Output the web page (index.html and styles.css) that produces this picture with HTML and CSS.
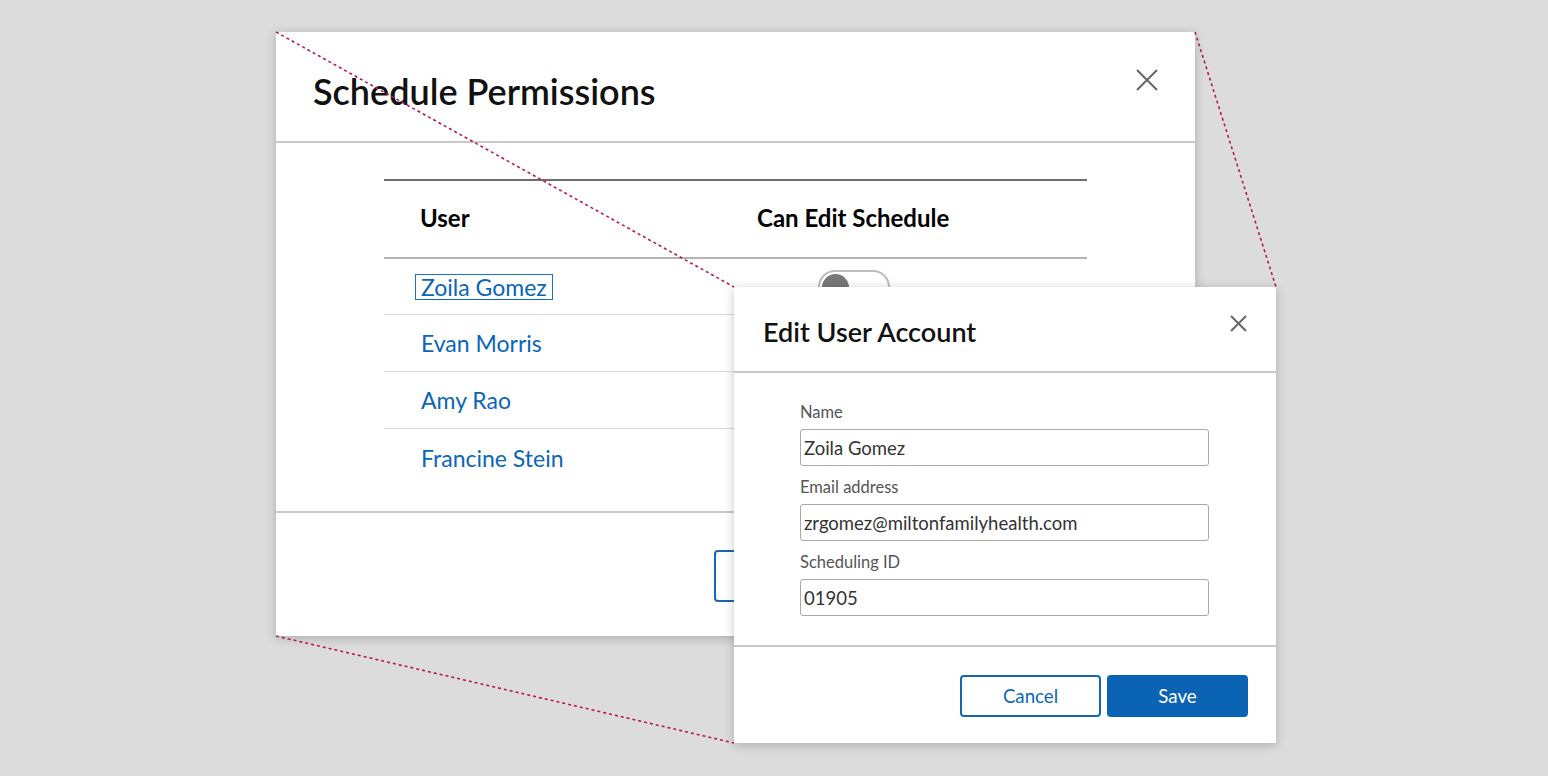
FILE: index.html
```html
<!DOCTYPE html>
<html lang="en">
<head>
<meta charset="utf-8">
<title>Schedule Permissions</title>
<link rel="stylesheet" href="styles.css">
</head>
<body>
<div class="stage">
  <section class="perm">
    <header class="perm-head">
      <h1 class="perm-title">Schedule Permissions</h1>
      <button class="close-btn big" aria-label="Close">
        <svg viewBox="0 0 22 22" width="22" height="22"><path d="M1 1L21 21M21 1L1 21" /></svg>
      </button>
    </header>
    <div class="perm-body">
      <div class="table">
        <div class="row head">
          <div class="cell c1">User</div>
          <div class="cell c2">Can Edit Schedule</div>
        </div>
        <div class="row first">
          <div class="cell c1"><a class="user focused" href="#">Zoila Gomez</a></div>
          <div class="cell c2"><span class="toggle"><span class="knob"></span></span></div>
        </div>
        <div class="row">
          <div class="cell c1"><a class="user" href="#">Evan Morris</a></div>
          <div class="cell c2"><span class="toggle"><span class="knob"></span></span></div>
        </div>
        <div class="row">
          <div class="cell c1"><a class="user" href="#">Amy Rao</a></div>
          <div class="cell c2"><span class="toggle"><span class="knob"></span></span></div>
        </div>
        <div class="row last">
          <div class="cell c1"><a class="user" href="#">Francine Stein</a></div>
          <div class="cell c2"><span class="toggle"><span class="knob"></span></span></div>
        </div>
      </div>
    </div>
    <footer class="perm-foot">
      <button class="btn outline" aria-label="Close"></button>
    </footer>
  </section>
</div>

<svg class="zoom-lines" width="1548" height="776" viewBox="0 0 1548 776">
  <line x1="276" y1="32" x2="734" y2="287" />
  <line x1="1195" y1="32" x2="1276" y2="287" />
  <line x1="276" y1="636" x2="734" y2="743" />
</svg>

<section class="edit">
  <header class="edit-head">
    <h2 class="edit-title">Edit User Account</h2>
    <button class="close-btn small" aria-label="Close">
      <svg viewBox="0 0 17 17" width="17" height="17"><path d="M1 1L16 16M16 1L1 16" /></svg>
    </button>
  </header>
  <div class="edit-body">
    <label class="field">
      <span class="label">Name</span>
      <span class="input">Zoila Gomez</span>
    </label>
    <label class="field">
      <span class="label">Email address</span>
      <span class="input">zrgomez@miltonfamilyhealth.com</span>
    </label>
    <label class="field">
      <span class="label">Scheduling ID</span>
      <span class="input">01905</span>
    </label>
  </div>
  <footer class="edit-foot">
    <button class="btn outline sm">Cancel</button>
    <button class="btn primary sm">Save</button>
  </footer>
</section>
</body>
</html>
```

FILE: styles.css
```css
* { box-sizing: border-box; }

html, body {
  margin: 0;
  padding: 0;
}

body {
  width: 1548px;
  height: 776px;
  background: #dcdcdc;
  font-family: "Lato", "Liberation Sans", sans-serif;
  color: #111;
  position: relative;
  overflow: hidden;
}

.stage {
  padding: 32px 0 0 276px;
}

/* ---------- Big dialog ---------- */
.perm {
  width: 919px;
  height: 604px;
  background: #fff;
  box-shadow: 0 2px 10px rgba(0, 0, 0, 0.22);
  display: flex;
  flex-direction: column;
}

.perm-head {
  height: 111px;
  flex: none;
  border-bottom: 2px solid #c9c9c9;
  display: flex;
  align-items: flex-start;
  justify-content: space-between;
  padding: 0 37px;
}

.perm-title {
  margin: 0;
  padding-top: 37px;
  font-size: 36px;
  line-height: 44px;
  font-weight: 600;
  color: #111;
}

.close-btn {
  border: 0;
  background: none;
  padding: 0;
  display: flex;
}

.close-btn svg path {
  stroke: #666;
  stroke-width: 2;
  fill: none;
}

.close-btn.big {
  margin-top: 37px;
}

.perm-body {
  height: 370px;
  flex: none;
  border-bottom: 2px solid #c9c9c9;
  padding-top: 36px;
}

.table {
  width: 703px;
  margin: 0 auto;
  border-top: 2px solid #6e6e6e;
}

.row {
  display: flex;
  height: 57px;
  align-items: center;
  border-bottom: 1px solid #dcdcdc;
}

.row.first {
  height: 56px;
}

.row.last {
  border-bottom: 0;
}

.row.head {
  height: 78px;
  align-items: flex-start;
  border-bottom: 2px solid #b4b4b4;
}

.cell {
  padding-left: 36px;
}

.c1 {
  width: 337px;
}

.c2 {
  flex: 1;
}

.row.head .cell {
  padding-top: 23px;
  font-size: 24px;
  line-height: 28px;
  font-weight: 700;
  color: #000;
}

.user {
  font-size: 23px;
  line-height: 24px;
  color: #0a66b7;
  text-decoration: none;
  display: inline-block;
  padding: 0 5px;
  margin-left: -5px;
  border: 1px solid transparent;
}

.user.focused {
  border-color: #1b71c2;
  text-decoration: underline;
  text-underline-offset: 3px;
  text-decoration-thickness: 1px;
}

.toggle {
  display: block;
  margin-left: 61px;
  width: 72px;
  height: 34px;
  border: 2px solid #bdbdbd;
  border-radius: 17px;
  padding: 2px;
}

.knob {
  display: block;
  width: 27px;
  height: 27px;
  border-radius: 50%;
  background: #777;
}

.perm-foot {
  flex: 1;
  padding: 37px 0 0 438px;
  display: flex;
  align-items: flex-start;
}

.btn {
  font-family: "Lato", "Liberation Sans", sans-serif;
  font-size: 18.7px;
  border-radius: 4px;
  cursor: pointer;
}

.btn.outline {
  width: 160px;
  height: 52px;
  background: #fff;
  color: #0a66b7;
  border: 2px solid #1567b5;
}

.btn.sm {
  width: 141px;
  height: 42px;
}

.btn.primary {
  background: #0a64b3;
  color: #fff;
  border: 0;
}

/* ---------- zoom lines ---------- */
.zoom-lines {
  position: absolute;
  left: 0;
  top: 0;
  pointer-events: none;
}

.zoom-lines line {
  stroke: #b8175a;
  stroke-width: 1.6;
  stroke-dasharray: 3 3;
}

/* ---------- Edit dialog ---------- */
.edit {
  position: absolute;
  left: 734px;
  top: 287px;
  width: 542px;
  height: 456px;
  background: #fff;
  box-shadow: 0 2px 10px rgba(0, 0, 0, 0.22);
  display: flex;
  flex-direction: column;
}

.edit-head {
  height: 86px;
  flex: none;
  border-bottom: 2px solid #c9c9c9;
  display: flex;
  justify-content: space-between;
  align-items: flex-start;
  padding: 0 29px;
}

.edit-title {
  margin: 0;
  padding-top: 29px;
  font-size: 27px;
  line-height: 32px;
  font-weight: 600;
  color: #111;
}

.close-btn.small {
  margin-top: 28px;
}

.edit-body {
  height: 274px;
  flex: none;
  border-bottom: 2px solid #c9c9c9;
  padding: 29px 0 0 66px;
  display: flex;
  flex-direction: column;
  gap: 11px;
}

.field {
  display: flex;
  flex-direction: column;
  width: 409px;
}

.label {
  font-size: 16.5px;
  line-height: 20px;
  color: #555;
  margin-bottom: 7px;
}

.input {
  height: 37px;
  border: 1px solid #a9a9a9;
  border-radius: 3px;
  padding-left: 3px;
  display: flex;
  align-items: center;
  font-size: 18.5px;
  color: #333;
}

.edit-foot {
  flex: 1;
  display: flex;
  justify-content: flex-end;
  align-items: flex-start;
  gap: 6px;
  padding: 28px 28px 0 0;
}
```
